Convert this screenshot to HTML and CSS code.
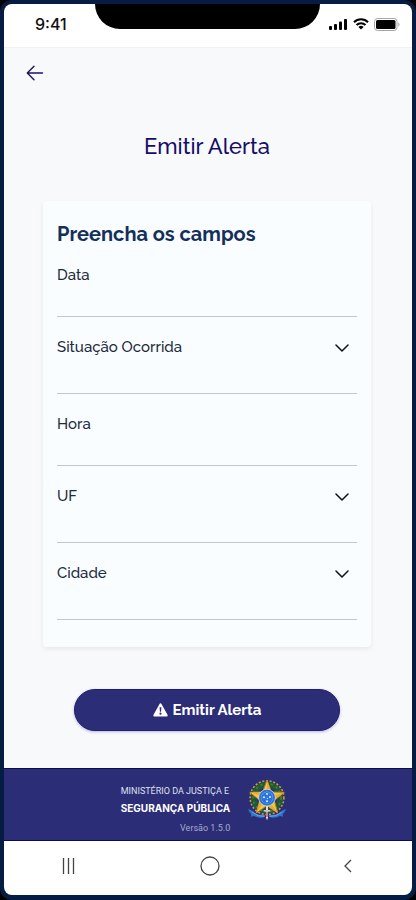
FILE: index.html
```
<!DOCTYPE html>
<html lang="pt-BR">
<head>
    <meta charset="UTF-8">
    <meta name="viewport" content="width=device-width, initial-scale=1.0">
    <title>Emitir Alerta</title>
    <link rel="stylesheet" href="styles.css">
</head>
<body>
    <div class="phone">
        <header class="status-bar">
            <span class="time">9:41</span>
            <div class="notch"></div>
            <div class="status-icons">
                <svg width="19" height="13" viewBox="0 0 19 13" aria-hidden="true">
                    <rect x="0" y="8" width="3" height="4" rx="1"/>
                    <rect x="5" y="6" width="3" height="6" rx="1"/>
                    <rect x="10" y="3.500" width="3" height="8.500" rx="1"/>
                    <rect x="15" y="1" width="3" height="11" rx="1"/>
                </svg>
                <svg width="16" height="12" viewBox="0 0 16 12" aria-hidden="true">
                    <path d="M1 4.200a10 10 0 0 1 14 0M3.500 7a6.400 6.400 0 0 1 9 0" fill="none" stroke="#000" stroke-width="2"/>
                    <path d="M5.400 8.900a3.800 3.800 0 0 1 5.200 0L8 11.600z"/>
                </svg>
                <svg width="26" height="13" viewBox="0 0 26 13" aria-hidden="true">
                    <rect x=".5" y=".5" width="22.500" height="12" rx="3" fill="none" stroke="#a6a6a6"/>
                    <rect x="2" y="2" width="19.500" height="9" rx="1.500"/>
                    <path d="M24.300 4.500v4c1.600-.6 1.600-3.400 0-4z" fill="#a6a6a6"/>
                </svg>
            </div>
        </header>

        <main class="content">
            <button class="back-button" type="button" aria-label="Voltar">
                <svg width="18" height="16" viewBox="0 0 18 16" aria-hidden="true">
                    <path d="M16.500 8H1.500M8 1.300L1.300 8L8 14.700"/>
                </svg>
            </button>

            <h1>Emitir Alerta</h1>

            <form class="alert-form" id="alertForm">
                <h2>Preencha os campos</h2>

                <div class="field">
                    <label for="data">Data</label>
                    <input type="text" id="data" name="data">
                </div>

                <div class="field field-select">
                    <label for="situacao">Situação Ocorrida</label>
                    <select id="situacao" name="situacao"><option value=""></option></select>
                    <svg class="chevron" width="14" height="8" viewBox="0 0 14 8" aria-hidden="true"><path d="M1 1l6 6 6-6"/></svg>
                </div>

                <div class="field">
                    <label for="hora">Hora</label>
                    <input type="text" id="hora" name="hora">
                </div>

                <div class="field field-select">
                    <label for="uf">UF</label>
                    <select id="uf" name="uf"><option value=""></option></select>
                    <svg class="chevron" width="14" height="8" viewBox="0 0 14 8" aria-hidden="true"><path d="M1 1l6 6 6-6"/></svg>
                </div>

                <div class="field field-select">
                    <label for="cidade">Cidade</label>
                    <select id="cidade" name="cidade"><option value=""></option></select>
                    <svg class="chevron" width="14" height="8" viewBox="0 0 14 8" aria-hidden="true"><path d="M1 1l6 6 6-6"/></svg>
                </div>
            </form>

            <button class="submit-button" type="submit" form="alertForm">
                <svg width="15" height="14" viewBox="0 0 15 14" aria-hidden="true">
                    <path d="M6.500.9a1.150 1.150 0 0 1 2 0l6 10.800a1.200 1.200 0 0 1-1 1.800h-12a1.200 1.200 0 0 1-1-1.800z" fill="#fff"/>
                    <path d="M6.600 4.300h1.800l-.3 4.400H6.900z" fill="#2b2d77"/>
                    <circle cx="7.500" cy="10.700" r="1.100" fill="#2b2d77"/>
                </svg>
                Emitir Alerta
            </button>
        </main>

        <footer class="footer">
            <div class="footer-text">
                <span class="ministry">MINISTÉRIO DA JUSTIÇA E</span>
                <strong>SEGURANÇA PÚBLICA</strong>
                <span class="version">Versão 1.5.0</span>
            </div>
            <!-- Brasão da República -->
            <svg class="emblem" width="40" height="42" viewBox="0 0 120 126" aria-hidden="true">
                <circle cx="60" cy="56" r="50" fill="none" stroke="#c9a04a" stroke-width="6" stroke-dasharray="6 5"/>
                <circle cx="60" cy="56" r="40" fill="none" stroke="#1f5a33" stroke-width="17"/>
                <circle cx="60" cy="56" r="42" fill="none" stroke="#4b7a35" stroke-width="5" stroke-dasharray="7 9"/>
                <path d="M3 90q14 4 24 14q12 5 28 4l-3 7q-18 3-31-4l-10 2l2-7q-8-8-10-16zM117 90q-14 4-24 14q-12 5-28 4l3 7q18 3 31-4l10 2l-2-7q8-8 10-16z" fill="#2f74c9"/>
                <path d="M16 100q17 14 37 12M104 100q-17 14-37 12" fill="none" stroke="#9dbce4" stroke-width="2"/>
                <path d="M60 3L73 39L112 40L82 64L92 102L60 80L28 102L38 64L8 40L47 39z" fill="#f1c93b" stroke="#b8782c" stroke-width="3"/>
                <path d="M60 3V56L73 39zM112 40L60 56L82 64zM92 102L60 56V80zM28 102L60 56L38 64zM8 40L60 56L47 39z" fill="#e8ab38"/>
                <path d="M57 72h6v44l-3 8l-3-8z" fill="#e4d8df"/>
                <path d="M50 93h20v5H50z" fill="#d5bfca"/>
                <path d="M58 99h4v15h-4z" fill="#b44a5c"/>
                <circle cx="60" cy="56" r="25" fill="#6ea8ea" stroke="#d5e0ee" stroke-width="2"/>
                <circle cx="60" cy="56" r="21" fill="none" stroke="#2f6fd0" stroke-width="5"/>
                <circle cx="60" cy="56" r="17" fill="#2874df"/>
                <g fill="#e5f1ff">
                    <circle cx="60" cy="45" r="3"/>
                    <circle cx="51" cy="55" r="3"/>
                    <circle cx="69" cy="54" r="3"/>
                    <circle cx="61" cy="58" r="2"/>
                    <circle cx="60" cy="67" r="3"/>
                </g>
            </svg>
        </footer>

        <nav class="nav-bar" aria-label="Navegação">
            <button type="button" aria-label="Recentes">
                <svg width="14" height="18" viewBox="0 0 14 18" aria-hidden="true"><path d="M1.500 1v16M6.500 1v16M11.500 1v16"/></svg>
            </button>
            <button type="button" aria-label="Início">
                <svg width="20" height="20" viewBox="0 0 20 20" aria-hidden="true"><circle cx="10" cy="10" r="9"/></svg>
            </button>
            <button type="button" aria-label="Anterior">
                <svg width="8" height="14" viewBox="0 0 8 14" aria-hidden="true"><path d="M7 1L1 7l6 6"/></svg>
            </button>
        </nav>
    </div>
</body>
</html>
```
FILE: styles.css
```
* {
    box-sizing: border-box;
}
body {
    margin: 0;
    background: #000;
    font-family: Raleway, Inter, sans-serif;
    color: #1c2b3d;
}
button {
    border: none;
    background: none;
    padding: 0;
    font-family: inherit;
    cursor: pointer;
}
svg {
    display: block;
    flex-shrink: 0;
}
.phone {
    display: flex;
    flex-direction: column;
    min-height: 100vh;
    padding: 4px 4px 5px;
    background: #061c42;
    border-radius: 12px;
}
.status-bar {
    display: grid;
    grid-template-columns: 91px 1fr 92px;
    height: 44px;
    background: #fff;
    border-bottom: 1px solid #f0f1f3;
    border-radius: 8px 8px 0 0;
}
.time {
    padding-left: 31px;
    font-family: Inter, sans-serif;
    font-size: 16px;
    font-weight: 500;
    line-height: 40px;
    color: #111;
}
.notch {
    height: 25px;
    background: #000;
    border-radius: 0 0 25px 25px;
}
.status-icons {
    display: flex;
    align-items: center;
    justify-content: flex-end;
    gap: 5px;
    height: 40px;
    padding-right: 12px;
}
.content {
    flex: 1;
    display: flex;
    flex-direction: column;
    padding: 13px 41px 37px 39px;
    background: #f8f9fb;
}
.back-button {
    display: flex;
    align-items: center;
    width: 24px;
    height: 24px;
    margin-left: -17px;
}
.back-button path {
    fill: none;
    stroke: #1a1465;
    stroke-width: 1.4;
    stroke-linecap: round;
    stroke-linejoin: round;
}
h1 {
    margin: 45px 0 39px;
    font-size: 22px;
    font-weight: 500;
    line-height: 32px;
    text-align: center;
    color: #150d68;
}
.alert-form {
    padding: 22px 14px 27px;
    background: #fafdff;
    border-radius: 4px;
    box-shadow: 0 2px 5px rgba(0, 0, 0, 0.07);
}
h2 {
    margin: 0;
    font-size: 20px;
    font-weight: 700;
    line-height: 22px;
    color: #14305a;
}
.field {
    display: grid;
    grid-template-rows: 20px 1fr;
    height: 72px;
    padding-top: 20px;
    border-bottom: 1px solid #c3c6ca;
}
.field label {
    font-size: 15px;
    font-weight: 500;
    line-height: 20px;
}
.field input,
.field select {
    width: 100%;
    border: none;
    outline: none;
    background: transparent;
    font-family: inherit;
    font-size: 15px;
}
/* label, select and arrow share one cell so the whole row opens the list */
.field-select {
    grid-template: 1fr / 1fr;
    height: 77px;
}
.field-select > * {
    grid-area: 1 / 1;
}
.field-select label,
.chevron {
    pointer-events: none;
}
.field select {
    appearance: none;
}
.chevron {
    justify-self: end;
    margin: 7px 8px 0 0;
}
.chevron path {
    fill: none;
    stroke: #111;
    stroke-width: 1.5;
    stroke-linecap: round;
    stroke-linejoin: round;
}
.submit-button {
    display: flex;
    align-items: center;
    justify-content: center;
    gap: 5px;
    height: 42px;
    margin: 42px 31px 0;
    background: #2b2d77;
    border: 1px solid #201f6b;
    border-radius: 21px;
    box-shadow: 0 1px 3px rgba(60, 50, 170, 0.35);
    font-size: 15px;
    font-weight: 700;
    color: #fff;
}
.footer {
    display: flex;
    justify-content: center;
    gap: 17px;
    height: 73px;
    padding: 10px 8px 0 0;
    background: #2b2d77;
    border-top: 1px solid #0d0a58;
    border-bottom: 1px solid #0d0a58;
    font-family: Inter, sans-serif;
    color: #fff;
}
.footer-text {
    display: flex;
    flex-direction: column;
}
.ministry,
.version {
    font-family: Roboto, Inter, sans-serif;
    font-size: 9px;
}
.ministry {
    line-height: 24px;
    color: #dfe0ef;
}
.footer-text strong {
    font-size: 10px;
    font-weight: 700;
    line-height: 10px;
}
.version {
    align-self: flex-end;
    line-height: 30px;
    color: #a9aacb;
}
.nav-bar {
    display: flex;
    justify-content: space-between;
    align-items: center;
    height: 54px;
    padding: 0 60px 4px 58px;
    background: #fff;
    border-radius: 0 0 8px 8px;
}
.nav-bar svg {
    fill: none;
    stroke: #444;
    stroke-width: 1.3;
}
```
